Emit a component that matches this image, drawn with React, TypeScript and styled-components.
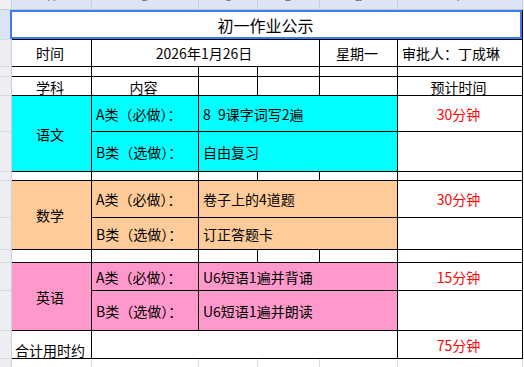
import React from 'react';
import styled, { createGlobalStyle } from 'styled-components';

const GlobalStyle = createGlobalStyle`
  html, body { margin: 0; padding: 0; background: #ffffff; }
  body {
    font-family: "Noto Sans CJK SC", "Noto Sans", sans-serif;
    overflow: hidden;
  }
`;

const Sheet = styled.div`
  display: grid;
  grid-template-columns: 12px 80px 107px 59px 62px 78px 125px 1fr;
  grid-template-rows: 10px 30px 27px 10px 19px 36px 40px 9px 37px 32px 13px 28px 40px 28px 30px;
  width: 524px;
  height: 367px;
  overflow: hidden;
  box-sizing: border-box;
  * { box-sizing: border-box; }
`;

const ColHead = styled.div<{ $active?: boolean }>`
  background: ${(p) => (p.$active ? '#dde4f4' : '#eef0f5')};
  border-right: 1px solid #c9cedb;
  border-bottom: 1px solid #c3c9d6;
  overflow: hidden;
  display: flex;
  justify-content: center;
  font-family: "Liberation Sans", Arial, sans-serif;
  font-size: 11px;
  line-height: 11px;
  color: #707070;
`;

const Letter = styled.span`
  display: block;
  margin-top: -8px;
`;

const RowHead = styled.div<{ $active?: boolean }>`
  background: ${(p) => (p.$active ? '#dce3f4' : '#eceef3')};
  border-right: 1px solid #c9cedb;
  border-bottom: 1px solid #d3d7e0;
`;

const Cell = styled.div<{
  $bg?: string;
  $span?: number;
  $rows?: number;
  $left?: boolean;
  $bottom?: boolean;
  $red?: boolean;
}>`
  grid-column: span ${(p) => p.$span ?? 1};
  grid-row: span ${(p) => p.$rows ?? 1};
  background: ${(p) => p.$bg ?? '#ffffff'};
  border-right: 1px solid #000000;
  border-bottom: 1px solid #000000;
  display: flex;
  align-items: ${(p) => (p.$bottom ? 'flex-end' : 'center')};
  justify-content: ${(p) => (p.$left ? 'flex-start' : 'center')};
  padding: 0 3px 0 ${(p) => (p.$left ? '4px' : '0')};
  font-size: 14px;
  line-height: 16px;
  word-spacing: 4px;
  color: ${(p) => (p.$red ? '#ff0000' : '#000000')};
  white-space: pre;
  min-width: 0;
`;

const Title = styled(Cell)`
  font-size: 16px;
  line-height: 18px;
  position: relative;
  z-index: 1;

  &::after {
    content: '';
    position: absolute;
    left: -2px;
    top: 0;
    right: 0;
    bottom: 0;
    border: 2px solid #3b7cf3;
    pointer-events: none;
  }
`;

const Filler = styled.div<{ $head?: boolean }>`
  background: ${(p) => (p.$head ? '#eef0f5' : '#ffffff')};
  border-bottom: ${(p) => (p.$head ? '1px solid #c3c9d6' : 'none')};
`;

const Blank = styled.div`
  border-right: 1px solid #dcdcdc;
`;

const CYAN = '#00ffff';
const TAN = '#ffcc99';
const PINK = '#ff99cc';

const letters = ['A', 'B', 'C', 'D', 'E', 'F'];

function EmptyRow() {
  return (
    <>
      <RowHead />
      <Cell />
      <Cell />
      <Cell />
      <Cell />
      <Cell />
      <Cell />
      <Filler />
    </>
  );
}

type Subject = {
  name: string;
  bg: string;
  a: string;
  b: string;
  time: string;
};

const subjects: Subject[] = [
  { name: '语文', bg: CYAN, a: '8 9课字词写2遍', b: '自由复习', time: '30分钟' },
  { name: '数学', bg: TAN, a: '卷子上的4道题', b: '订正答题卡', time: '30分钟' },
  { name: '英语', bg: PINK, a: 'U6短语1遍并背诵', b: 'U6短语1遍并朗读', time: '15分钟' },
];

function SubjectBlock({ s, last }: { s: Subject; last: boolean }) {
  return (
    <>
      <RowHead />
      <Cell $bg={s.bg} $rows={2}>{s.name}</Cell>
      <Cell $bg={s.bg} $left>A类（必做）：</Cell>
      <Cell $bg={s.bg} $span={3} $left>{s.a}</Cell>
      <Cell $red>{s.time}</Cell>
      <Filler />
      <RowHead />
      <Cell $bg={s.bg} $left>B类（选做）：</Cell>
      <Cell $bg={s.bg} $span={3} $left>{s.b}</Cell>
      <Cell />
      <Filler />
      {!last && <EmptyRow />}
    </>
  );
}

export default function App() {
  return (
    <>
      <GlobalStyle />
      <Sheet>
        <ColHead />
        {letters.map((l) => (
          <ColHead key={l} $active>
            <Letter>{l}</Letter>
          </ColHead>
        ))}
        <Filler $head />

        <RowHead $active />
        <Title $span={6}>初一作业公示</Title>
        <Filler />

        <RowHead />
        <Cell>时间</Cell>
        <Cell $span={3}>2026年1月26日</Cell>
        <Cell>星期一</Cell>
        <Cell $left>审批人：丁成琳</Cell>
        <Filler />

        <EmptyRow />

        <RowHead />
        <Cell $bottom>学科</Cell>
        <Cell $bottom>内容</Cell>
        <Cell />
        <Cell />
        <Cell />
        <Cell $bottom>预计时间</Cell>
        <Filler />

        {subjects.map((s, i) => (
          <SubjectBlock key={s.name} s={s} last={i === subjects.length - 1} />
        ))}

        <RowHead />
        <Cell $bottom>合计用时约</Cell>
        <Cell $span={4} />
        <Cell $red>75分钟</Cell>
        <Filler />

        <RowHead />
        <Blank />
        <Blank />
        <Blank />
        <Blank />
        <Blank />
        <Blank />
        <Filler />
      </Sheet>
    </>
  );
}
